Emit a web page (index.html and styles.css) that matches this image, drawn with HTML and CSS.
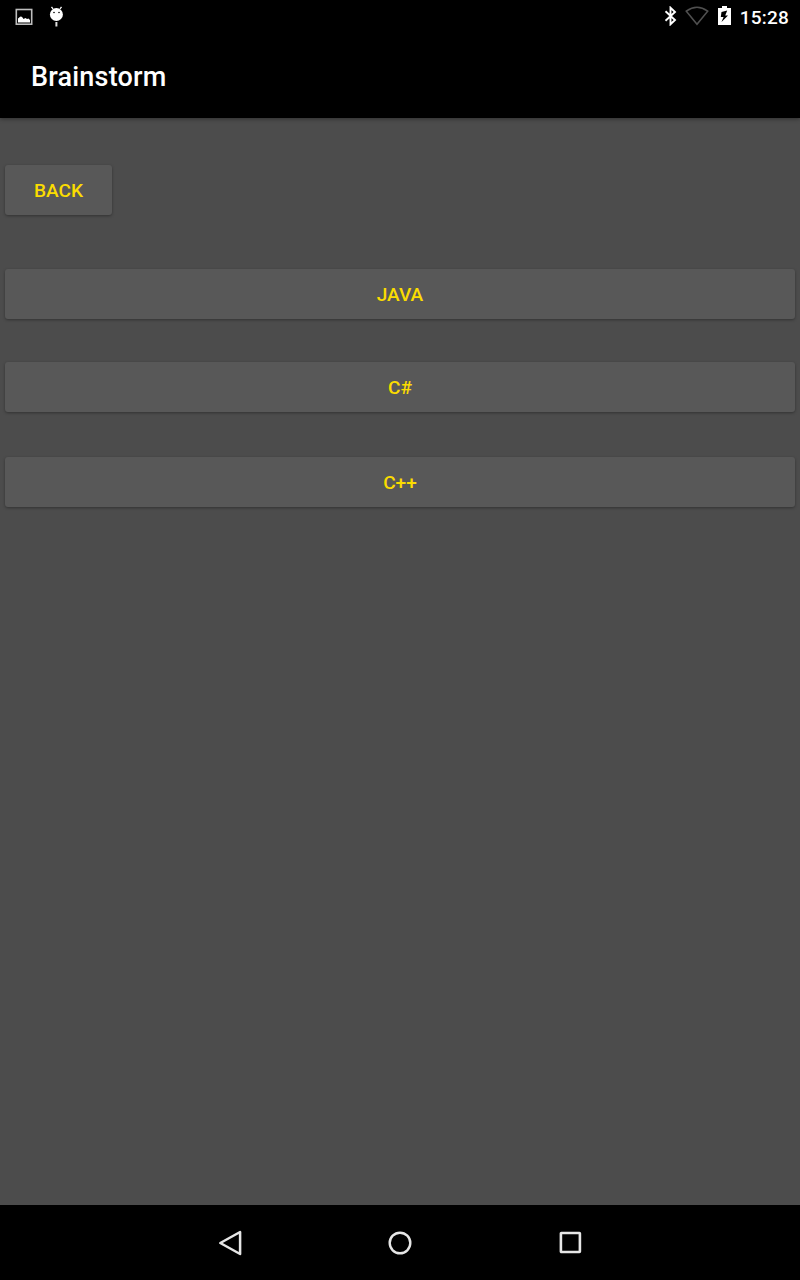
FILE: index.html
```html
<!DOCTYPE html>
<html lang="en">
<head>
<meta charset="utf-8">
<title>Brainstorm</title>
<link rel="stylesheet" href="styles.css">
</head>
<body>
<div class="screen">
  <div class="status-bar">
    <div class="notifications">
      <svg width="18" height="18" viewBox="0 0 18 18"><rect x="1.300" y="1.500" width="15.400" height="14.700" fill="none" stroke="#bdbdbd" stroke-width="1.600"/><path d="M3 14.500V10.500L4.500 9.200Q6 7.800 7.500 9.500L8.500 11L10.500 10L12 11L13.500 10.500L15 12V14.500Z" fill="#fff"/></svg>
      <svg class="droid" width="14" height="21" viewBox="0 0 14 21"><path d="M4 3L2.500 .8M11 3L12.500 .8" stroke="#fff" stroke-width="1.300"/><ellipse cx="7.400" cy="8.500" rx="6.500" ry="6.500" fill="#fff"/><path d="M7.400 16V20.500" stroke="#ddd" stroke-width="2"/><circle cx="5" cy="6.500" r=".8"/><circle cx="10" cy="6.500" r=".8"/></svg>
    </div>
    <div class="system">
      <svg width="14" height="20" viewBox="0 0 14 20"><path d="M1.500 5.300L11 14L6.500 18.300V1.700L11 6L1.500 14.700" fill="none" stroke="#fff" stroke-width="1.900"/></svg>
      <svg class="wifi" width="24" height="20" viewBox="0 0 24 20"><path d="M1.300 5.200Q12-2.600 22.700 5.200L12 18.300Z" fill="none" stroke="#505050" stroke-width="1.600"/></svg>
      <svg class="battery" width="13" height="20" viewBox="0 0 13 20"><path d="M4 0H9V2H13V19H0V2H4Z" fill="#fff"/><path d="M9.200 4.500L3.500 6L2.800 11H5.600L3.500 16L10 9.500H7.200Z" fill="#000"/></svg>
      <span class="clock">15:28</span>
    </div>
  </div>
  <header class="app-bar"><h1 class="title">Brainstorm</h1></header>
  <main class="content">
    <button class="button back">BACK</button>
    <button class="button java">JAVA</button>
    <button class="button csharp">C#</button>
    <button class="button cpp">C++</button>
  </main>
  <nav class="nav-bar">
    <svg width="26" height="28" viewBox="0 0 26 28"><path d="M3.300 14L23.100 3V25Z" fill="none" stroke="#e6e6e6" stroke-width="2.500" stroke-linejoin="round"/></svg>
    <svg width="26" height="28" viewBox="0 0 26 28"><circle cx="13" cy="14" r="10.300" fill="none" stroke="#e6e6e6" stroke-width="2.400"/></svg>
    <svg width="26" height="28" viewBox="0 0 26 28"><rect x="3.900" y="4" width="19" height="19" rx=".5" fill="none" stroke="#e6e6e6" stroke-width="2.600"/></svg>
  </nav>
</div>
</body>
</html>
```
FILE: styles.css
```css
* { box-sizing: border-box; }
body { margin: 0; background: #4c4c4c; font-family: Roboto, "Noto Sans", sans-serif; }
svg { display: block; }
.screen { width: 800px; height: 1280px; display: flex; flex-direction: column; }
.status-bar { height: 34px; display: flex; justify-content: space-between; background: #000; color: #fff; }
.notifications { display: flex; padding: 8px 0 0 15px; }
.droid { margin: -2px 0 0 16px; }
.system { display: flex; padding: 6px 11px 0 0; }
.wifi { margin-left: 7px; }
.battery { margin-left: 9px; }
.clock { margin-left: 9px; font-size: 19px; line-height: 24px; font-weight: 500; letter-spacing: .2px; }
.app-bar { height: 84px; padding: 25px 31px 0; background: #000; color: #fff; box-shadow: 0 1px 4px rgba(0, 0, 0, .4); }
.title { margin: 0; font-size: 27px; line-height: 36px; font-weight: 500; letter-spacing: .2px; }
.content { flex: 1; display: flex; flex-direction: column; padding: 47px 5px 0; }
.button { height: 50px; padding: 1px 0 0; border: 0; border-radius: 3px; background: #585858; color: #fbdc00; font: 500 19.100px/49px Roboto, sans-serif; box-shadow: 0 1px 3px rgba(0, 0, 0, .35); }
.back { width: 107px; }
.java { margin-top: 54px; }
.csharp { margin-top: 43px; }
.cpp { margin-top: 45px; }
.nav-bar { height: 75px; display: flex; justify-content: center; gap: 144px; padding-top: 24px; background: #000; }
```
